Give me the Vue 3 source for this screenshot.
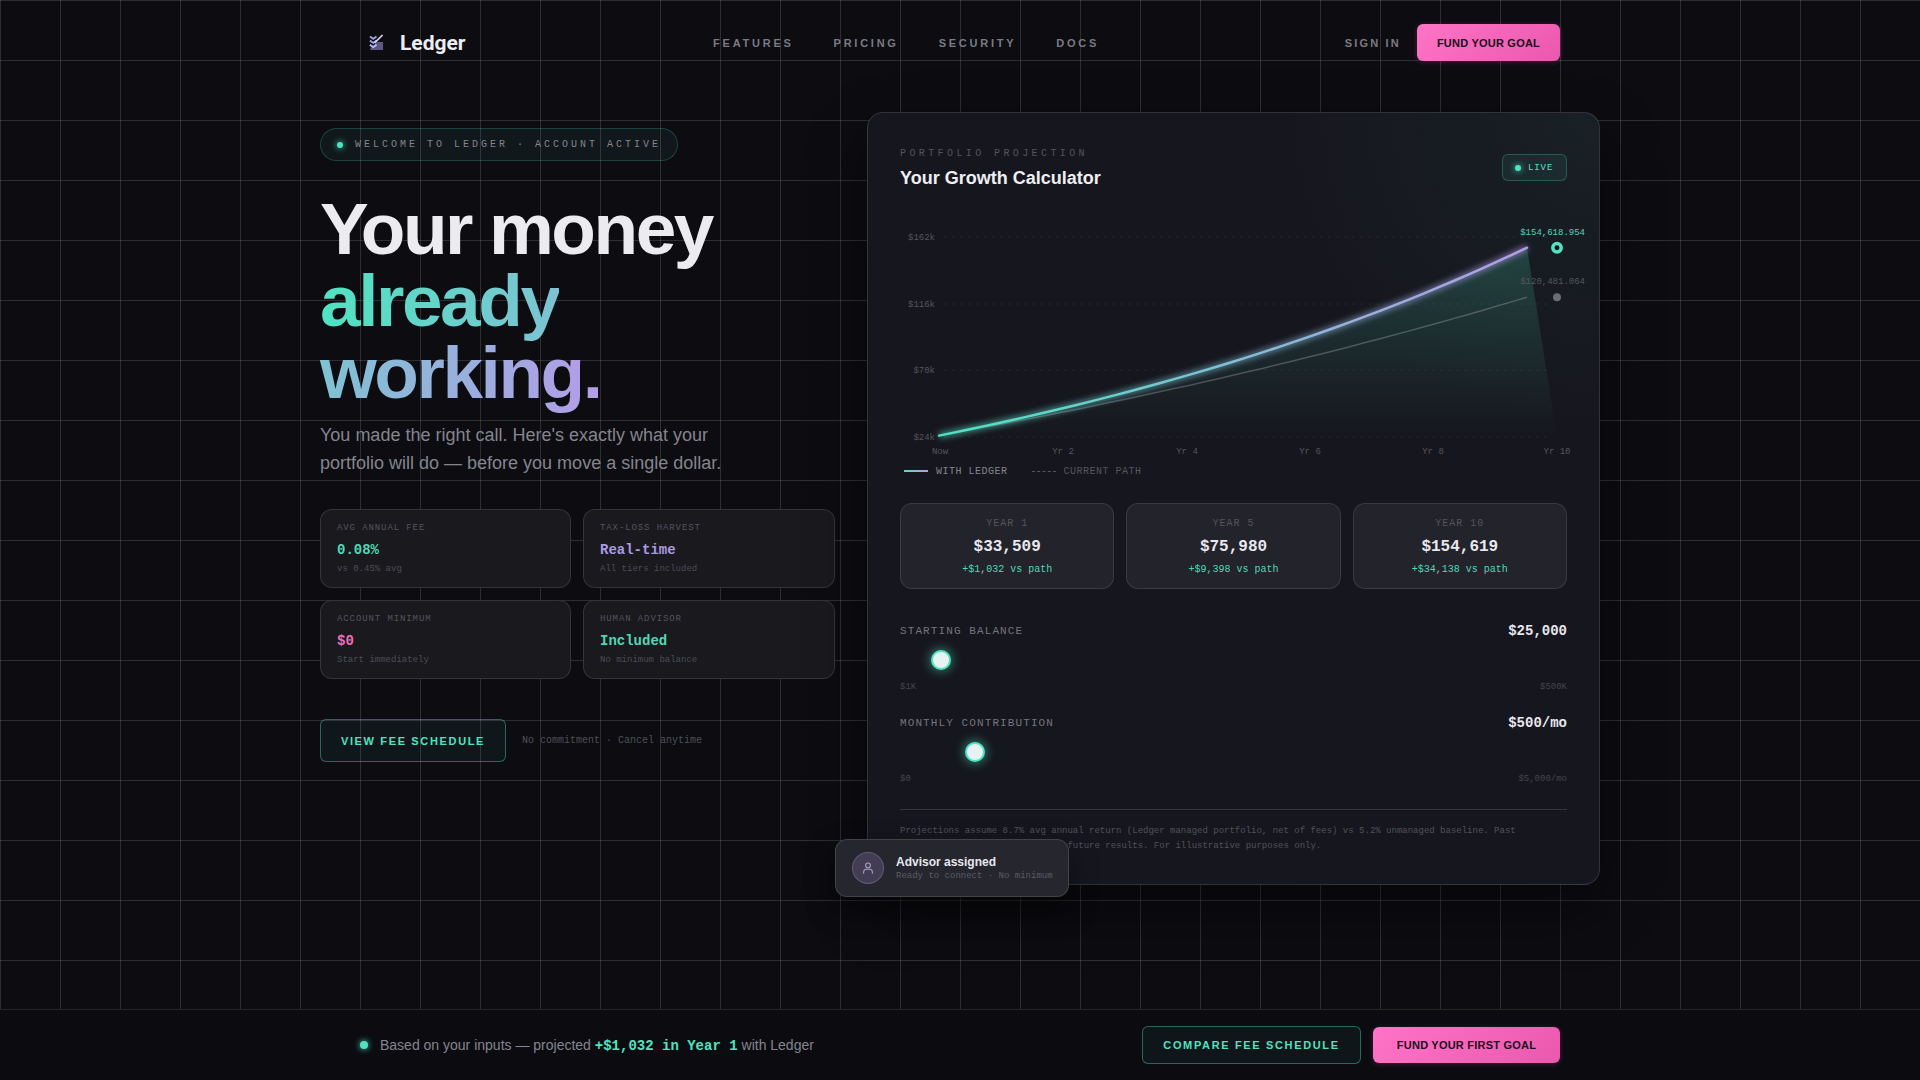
<template>
  <div class="page">
    <header class="nav">
      <div class="brand">
        <svg class="brand-icon" viewBox="0 0 16 18" fill="none">
          <defs>
            <linearGradient id="logoGrad" x1="0" y1="0" x2="1" y2="1">
              <stop offset="0" stop-color="#a99be6" />
              <stop offset="1" stop-color="#7fb6d8" />
            </linearGradient>
          </defs>
          <path d="M8.5 8.5h6.5v8.5H1.5v-2" fill="#6f6a9c" fill-opacity=".8" />
          <path d="M1 2.5l3.5 2.5L8 2.5M1 7 4.5 9.5 8 7M1 11.5 4.5 14 8 11.5" stroke="url(#logoGrad)" stroke-width="2" />
          <path d="M6 9.5 14.5 1" stroke="#d9d4f2" stroke-width="1.8" />
          <path d="M1 11.5 4.5 14 8 11.5" stroke="#c0b6ee" stroke-width="1.6" />
        </svg>
        <span class="brand-name">Ledger</span>
      </div>
      <nav class="nav-links">
        <a v-for="link in navLinks" :key="link">{{ link }}</a>
      </nav>
      <div class="nav-actions">
        <a class="sign-in">SIGN IN</a>
        <button class="btn-pink nav-btn">FUND YOUR GOAL</button>
      </div>
    </header>

    <main class="hero">
      <section class="intro">
        <div class="welcome">
          <span class="dot"></span>
          WELCOME TO LEDGER · ACCOUNT ACTIVE
        </div>
        <h1>Your money<br /><span class="grad">already<br />working.</span></h1>
        <p class="lede">You made the right call. Here's exactly what your portfolio will do — before you move a single dollar.</p>
        <div class="stats">
          <div v-for="s in stats" :key="s.label" class="stat">
            <div class="stat-label">{{ s.label }}</div>
            <div class="stat-value" :class="s.tone">{{ s.value }}</div>
            <div class="stat-note">{{ s.note }}</div>
          </div>
        </div>
        <div class="cta-row">
          <button class="btn-outline view-btn">VIEW FEE SCHEDULE</button>
          <span class="cta-note">No commitment · Cancel anytime</span>
        </div>
      </section>

      <section class="calc">
        <div class="calc-head">
          <div>
            <div class="eyebrow">PORTFOLIO PROJECTION</div>
            <h2>Your Growth Calculator</h2>
          </div>
          <div class="live"><span class="dot small"></span>LIVE</div>
        </div>

        <svg class="chart" viewBox="0 0 667 256" width="667" height="256">
          <defs>
            <linearGradient id="lineGrad" gradientUnits="userSpaceOnUse" x1="39" y1="0" x2="627" y2="0">
              <stop offset="0" stop-color="#4fe3c1" />
              <stop offset="1" stop-color="#b49ce8" />
            </linearGradient>
            <linearGradient id="areaGrad" x1="0" y1="0" x2="0" y2="1">
              <stop offset="0" stop-color="#4fe3c1" stop-opacity=".2" />
              <stop offset="1" stop-color="#4fe3c1" stop-opacity="0" />
            </linearGradient>
            <filter id="glow" x="-5%" y="-20%" width="110%" height="140%">
              <feGaussianBlur stdDeviation="3" />
            </filter>
          </defs>
          <g v-for="t in yTicks" :key="t.label">
            <line class="tick-line" x1="44" x2="650" :y1="t.y" :y2="t.y" />
            <text class="axis" x="35" :y="t.y + 3" text-anchor="end">{{ t.label }}</text>
          </g>
          <text v-for="t in xTicks" :key="t.label" class="axis" :x="t.x" y="254" text-anchor="middle">{{ t.label }}</text>
          <path :d="areaPath" fill="url(#areaGrad)" />
          <path :d="basePath" fill="none" stroke="rgba(255,255,255,.22)" stroke-width="1.5" />
          <path :d="ledgerPath" fill="none" stroke="url(#lineGrad)" stroke-width="5" opacity=".7" filter="url(#glow)" />
          <path :d="ledgerPath" fill="none" stroke="url(#lineGrad)" stroke-width="2.5" stroke-linecap="round" />
          <circle cx="657" :cy="endLedgerY" r="4.2" fill="#14151c" stroke="#4fe3c1" stroke-width="3.5" />
          <circle cx="657" :cy="endBaseY" r="4" fill="#6c6c74" />
          <text class="end-label teal" x="685" :y="endLedgerY - 13" text-anchor="end">{{ money(endLedger) }}</text>
          <text class="end-label" x="685" :y="endBaseY - 13" text-anchor="end">{{ money(endBase) }}</text>
        </svg>

        <div class="legend">
          <span class="legend-item on"><i class="swatch"></i>WITH LEDGER</span>
          <span class="legend-item"><i class="swatch dashed"></i>CURRENT PATH</span>
        </div>

        <div class="years">
          <div v-for="y in years" :key="y.label" class="year">
            <div class="year-label">{{ y.label }}</div>
            <div class="year-value">{{ y.value }}</div>
            <div class="year-delta">{{ y.delta }}</div>
          </div>
        </div>

        <div class="slider-block first">
          <div class="slider-head">
            <span>STARTING BALANCE</span>
            <strong>{{ wholeMoney(balance) }}</strong>
          </div>
          <input v-model.number="balance" type="range" min="1000" max="500000" step="1000" />
          <div class="slider-range"><span>$1K</span><span>$500K</span></div>
        </div>
        <div class="slider-block">
          <div class="slider-head">
            <span>MONTHLY CONTRIBUTION</span>
            <strong>{{ wholeMoney(monthly) }}/mo</strong>
          </div>
          <input v-model.number="monthly" type="range" min="0" max="5000" step="50" />
          <div class="slider-range"><span>$0</span><span>$5,000/mo</span></div>
        </div>

        <p class="disclaimer">Projections assume 8.7% avg annual return (Ledger managed portfolio, net of fees) vs 5.2% unmanaged baseline. Past performance does not guarantee future results. For illustrative purposes only.</p>

        <div class="toast">
          <div class="avatar">
            <svg viewBox="0 0 24 24" width="14" height="14" fill="none" stroke="#a6a2c4" stroke-width="1.8" stroke-linecap="round">
              <circle cx="12" cy="7.5" r="4" />
              <path d="M4.5 21v-2a5 5 0 0 1 5-5h5a5 5 0 0 1 5 5v2" />
            </svg>
          </div>
          <div>
            <div class="toast-title">Advisor assigned</div>
            <div class="toast-sub">Ready to connect · No minimum</div>
          </div>
        </div>
      </section>
    </main>

    <footer class="bottom">
      <div class="bottom-text">
        <span class="dot big"></span>
        <span>Based on your inputs — projected <b>+{{ wholeMoney(years1Gain) }} in Year 1</b> with Ledger</span>
      </div>
      <div class="bottom-actions">
        <button class="btn-outline compare-btn">COMPARE FEE SCHEDULE</button>
        <button class="btn-pink first-btn">FUND YOUR FIRST GOAL</button>
      </div>
    </footer>
  </div>
</template>

<script setup>
import { computed, ref } from "vue";

const navLinks = ["FEATURES", "PRICING", "SECURITY", "DOCS"];

const stats = [
  { label: "AVG ANNUAL FEE", value: "0.08%", note: "vs 0.45% avg", tone: "teal" },
  { label: "TAX-LOSS HARVEST", value: "Real-time", note: "All tiers included", tone: "violet" },
  { label: "ACCOUNT MINIMUM", value: "$0", note: "Start immediately", tone: "pink" },
  { label: "HUMAN ADVISOR", value: "Included", note: "No minimum balance", tone: "teal" },
];

const balance = ref(25000);
const monthly = ref(500);

const project = (rate, months) => {
  const r = rate / 12;
  const g = Math.pow(1 + r, months);
  return balance.value * g + (monthly.value * (g - 1)) / r;
};

const money = (v) => "$" + v.toLocaleString("en-US");
const wholeMoney = (v) => "$" + Math.round(v).toLocaleString("en-US");

const yOf = (v) => 237 - ((v - 24000) / 138000) * 200;
const xOf = (m) => 39 + (m / 120) * 588;

const yTicks = [
  { label: "$162k", y: 37 },
  { label: "$116k", y: 104 },
  { label: "$70k", y: 170 },
  { label: "$24k", y: 237 },
];

const xTicks = [
  { label: "Now", x: 40 },
  { label: "Yr 2", x: 163 },
  { label: "Yr 4", x: 287 },
  { label: "Yr 6", x: 410 },
  { label: "Yr 8", x: 533 },
  { label: "Yr 10", x: 657 },
];

const curve = (rate) => {
  let d = "";
  for (let m = 0; m <= 120; m += 3) {
    d += `${m ? "L" : "M"}${xOf(m).toFixed(1)} ${yOf(project(rate, m)).toFixed(1)}`;
  }
  return d;
};

const ledgerPath = computed(() => curve(0.087));
const basePath = computed(() => curve(0.052));
const areaPath = computed(() => `${ledgerPath.value}L657 237L39 237Z`);

const endLedger = computed(() => project(0.087, 120));
const endBase = computed(() => project(0.052, 120));
const endLedgerY = computed(() => yOf(endLedger.value));
const endBaseY = computed(() => yOf(endBase.value));

const years = computed(() =>
  [1, 5, 10].map((n) => {
    const a = project(0.087, n * 12);
    const b = project(0.052, n * 12);
    return {
      label: `YEAR ${n}`,
      value: wholeMoney(a),
      delta: `+${wholeMoney(a - b)} vs path`,
    };
  })
);

const years1Gain = computed(() => project(0.087, 12) - project(0.052, 12));
</script>

<style>
html,
body {
  margin: 0;
  background: #0c0c11;
}
</style>

<style scoped>
.page {
  height: 1080px;
  overflow: hidden;
  display: flex;
  flex-direction: column;
  color: #e8e8ee;
  font-family: "Liberation Sans", Arial, sans-serif;
  background-color: #0c0c11;
  background-image:
    linear-gradient(rgba(255, 255, 255, 0.14) 1px, transparent 1px),
    linear-gradient(90deg, rgba(255, 255, 255, 0.14) 1px, transparent 1px);
  background-size: 60px 60px;
}

button {
  font-family: "Liberation Sans", Arial, sans-serif;
  cursor: pointer;
}

.teal {
  color: #4fd8b8;
}
.violet {
  color: #a99be0;
}
.pink {
  color: #ef6dbd;
}

/* nav */
.nav {
  width: 1200px;
  margin: 0 auto;
  height: 84px;
  box-sizing: border-box;
  padding-top: 24px;
  display: flex;
  align-items: flex-start;
  justify-content: space-between;
  position: relative;
}
.brand {
  display: flex;
  align-items: center;
  gap: 16px;
  padding-left: 9px;
  height: 37px;
}
.brand-icon {
  width: 15px;
  height: 17px;
}
.brand-name {
  font-family: Roboto, sans-serif;
  font-weight: 700;
  font-size: 21px;
  color: #ececf2;
}
.nav-links {
  display: flex;
  gap: 40px;
  height: 37px;
  align-items: center;
  margin-left: 2px;
}
.nav-links a {
  font-size: 11px;
  font-weight: 700;
  letter-spacing: 0.25em;
  color: #7b7b84;
}
.nav-actions {
  display: flex;
  align-items: center;
  gap: 16px;
}
.sign-in {
  font-size: 11px;
  font-weight: 700;
  letter-spacing: 0.2em;
  color: #7b7b84;
}
.btn-pink {
  border: none;
  border-radius: 6px;
  background: linear-gradient(135deg, #ff74c6, #ea58ae);
  color: #17101a;
  font-weight: 700;
  font-size: 11px;
  box-shadow: 0 1px 6px rgba(255, 105, 190, 0.2);
}
.nav-btn {
  width: 143px;
  height: 37px;
  letter-spacing: 0.02em;
}

/* hero */
.hero {
  flex: 1;
  width: 1280px;
  margin: 0 auto;
  display: grid;
  grid-template-columns: 515px 733px;
  column-gap: 32px;
  padding-top: 28px;
  box-sizing: border-box;
  align-items: start;
}
.intro {
  padding-top: 16px;
}
.dot {
  display: inline-block;
  width: 6px;
  height: 6px;
  border-radius: 50%;
  background: #4fe3c1;
  box-shadow: 0 0 6px #4fe3c1;
  flex: none;
}
.welcome {
  display: inline-flex;
  align-items: center;
  gap: 12px;
  height: 33px;
  box-sizing: border-box;
  padding: 0 16px;
  width: 358px;
  border: 1px solid rgba(79, 227, 193, 0.22);
  border-radius: 17px;
  background: rgba(79, 227, 193, 0.06);
  font-family: "Liberation Mono", monospace;
  font-size: 10px;
  letter-spacing: 0.3em;
  color: #85858c;
  white-space: nowrap;
}
h1 {
  margin: 32px 0 0;
  font-size: 73px;
  line-height: 72px;
  font-weight: 700;
  letter-spacing: -2.45px;
  color: #ebebf0;
}
.grad {
  background: linear-gradient(90deg, #4fe3c1, #b49ce8);
  -webkit-background-clip: text;
  background-clip: text;
  color: transparent;
}
.lede {
  margin: 12px 0 0;
  width: 420px;
  font-size: 18px;
  line-height: 28px;
  color: #85858e;
}
.stats {
  margin-top: 32px;
  display: grid;
  grid-template-columns: 251px 252px;
  gap: 12px;
}
.stat {
  height: 79px;
  box-sizing: border-box;
  padding: 13px 16px;
  border: 1px solid rgba(255, 255, 255, 0.12);
  border-radius: 12px;
  background: #19191e;
  font-family: "Liberation Mono", monospace;
}
.stat-label {
  font-size: 9px;
  line-height: 11px;
  letter-spacing: 0.1em;
  color: #55555c;
}
.stat-value {
  margin-top: 7px;
  font-size: 14px;
  line-height: 18px;
  font-weight: 700;
}
.stat-note {
  margin-top: 4px;
  font-size: 9px;
  line-height: 12px;
  color: #4d4d54;
}
.cta-row {
  margin-top: 40px;
  display: flex;
  align-items: center;
  gap: 16px;
}
.btn-outline {
  background: rgba(79, 227, 193, 0.05);
  border: 1px solid rgba(79, 227, 193, 0.4);
  border-radius: 6px;
  color: #4fe3c1;
  font-weight: 700;
  font-size: 11px;
  letter-spacing: 0.15em;
}
.view-btn {
  width: 186px;
  height: 43px;
}
.cta-note {
  font-family: "Liberation Mono", monospace;
  font-size: 10px;
  color: #505057;
}

/* calculator */
.calc {
  position: relative;
  height: 773px;
  box-sizing: border-box;
  padding: 32px;
  border: 1px solid rgba(255, 255, 255, 0.12);
  border-radius: 16px;
  background: radial-gradient(circle at 100% 0, rgba(79, 227, 193, 0.05), transparent 30%), #16161e;
  box-shadow: 0 24px 60px rgba(0, 0, 0, 0.4);
}
.calc-head {
  display: flex;
  justify-content: space-between;
  align-items: flex-start;
}
.eyebrow {
  margin-top: 3px;
  font-family: "Liberation Mono", monospace;
  font-size: 10px;
  line-height: 12px;
  letter-spacing: 3.4px;
  color: #55555c;
}
h2 {
  margin: 7px 0 0;
  font-size: 18px;
  line-height: 22px;
  font-weight: 700;
  color: #efeff3;
}
.live {
  display: flex;
  align-items: center;
  gap: 7px;
  margin-top: 9px;
  width: 65px;
  height: 27px;
  box-sizing: border-box;
  padding-left: 12px;
  border: 1px solid rgba(79, 227, 193, 0.25);
  border-radius: 6px;
  background: rgba(79, 227, 193, 0.07);
  font-family: "Liberation Mono", monospace;
  font-size: 9px;
  letter-spacing: 0.1em;
  color: #4fe3c1;
}
.dot.small {
  width: 6px;
  height: 6px;
}
.chart {
  display: block;
  margin-top: 11px;
  overflow: visible;
}
.tick-line {
  stroke: rgba(255, 255, 255, 0.06);
  stroke-dasharray: 3 5;
}
.axis {
  font-family: "Liberation Mono", monospace;
  font-size: 9px;
  fill: #55555c;
}
.end-label {
  font-family: "Liberation Mono", monospace;
  font-size: 9px;
  fill: #55555c;
}
.end-label.teal {
  fill: #4fd8b8;
}
.legend {
  display: flex;
  gap: 24px;
  margin-top: 8px;
  padding-left: 4px;
  height: 14px;
  align-items: center;
  position: relative;
}
.legend-item {
  display: flex;
  align-items: center;
  gap: 8px;
  font-family: "Liberation Mono", monospace;
  font-size: 10px;
  letter-spacing: 0.05em;
  color: #55555c;
}
.legend-item.on {
  color: #85858c;
}
.swatch {
  display: block;
  width: 24px;
  height: 2px;
  background: linear-gradient(90deg, #4fe3c1, #b49ce8);
}
.swatch.dashed {
  height: 0;
  background: none;
  border-top: 1px dashed #55555c;
}
.years {
  margin-top: 25px;
  display: grid;
  grid-template-columns: repeat(3, 1fr);
  gap: 12px;
}
.year {
  height: 86px;
  box-sizing: border-box;
  padding-top: 14px;
  border: 1px solid rgba(255, 255, 255, 0.11);
  border-radius: 12px;
  background: #22232b;
  text-align: center;
  font-family: "Liberation Mono", monospace;
}
.year-label {
  font-size: 10px;
  line-height: 12px;
  letter-spacing: 0.1em;
  color: #55555c;
}
.year-value {
  margin-top: 7px;
  font-size: 16px;
  line-height: 20px;
  font-weight: 700;
  color: #e8e8ee;
}
.year-delta {
  margin-top: 7px;
  font-size: 10px;
  line-height: 12px;
  color: #4fd8b8;
}
.slider-block {
  margin-top: 21px;
  font-family: "Liberation Mono", monospace;
}
.slider-block.first {
  margin-top: 33px;
}
.slider-head {
  display: flex;
  justify-content: space-between;
  align-items: center;
  height: 18px;
  font-size: 11px;
  letter-spacing: 0.1em;
  color: #75757e;
}
.slider-head strong {
  font-size: 14px;
  letter-spacing: 0;
  color: #e8e8ee;
}
input[type="range"] {
  -webkit-appearance: none;
  appearance: none;
  display: block;
  width: 100%;
  height: 20px;
  margin: 10px 0 0;
  background: transparent;
  outline: none;
}
input[type="range"]::-webkit-slider-thumb {
  -webkit-appearance: none;
  width: 20px;
  height: 20px;
  border-radius: 50%;
  background: #e8f2f0;
  border: 2px solid #4fe3c1;
  box-sizing: border-box;
  box-shadow: 0 0 12px rgba(79, 227, 193, 0.7);
  cursor: pointer;
}
.slider-range {
  display: flex;
  justify-content: space-between;
  margin-top: 11px;
  font-size: 9px;
  line-height: 12px;
  color: #45454c;
}
.disclaimer {
  margin: 24px 0 0;
  padding-top: 14px;
  border-top: 1px solid rgba(255, 255, 255, 0.13);
  font-family: "Liberation Mono", monospace;
  font-size: 9px;
  line-height: 15px;
  color: #52525a;
}
.toast {
  position: absolute;
  left: -33px;
  bottom: -13px;
  width: 234px;
  height: 58px;
  box-sizing: border-box;
  padding-left: 16px;
  display: flex;
  align-items: center;
  gap: 12px;
  border: 1px solid rgba(255, 255, 255, 0.13);
  border-radius: 12px;
  background: #26262e;
  box-shadow: 0 12px 30px rgba(0, 0, 0, 0.45);
}
.avatar {
  width: 32px;
  height: 32px;
  box-sizing: border-box;
  border-radius: 50%;
  border: 1px solid rgba(180, 156, 232, 0.3);
  background: rgba(180, 156, 232, 0.2);
  display: flex;
  align-items: center;
  justify-content: center;
}
.toast-title {
  font-size: 12px;
  line-height: 15px;
  font-weight: 700;
  color: #e8e8ee;
}
.toast-sub {
  margin-top: 1px;
  font-family: "Liberation Mono", monospace;
  font-size: 9px;
  line-height: 11px;
  color: #5c5c64;
}

/* bottom bar */
.bottom {
  height: 71px;
  flex: none;
  box-sizing: border-box;
  padding: 0 calc((100% - 1200px) / 2);
  display: flex;
  align-items: center;
  justify-content: space-between;
  background: #0b0b10;
  border-top: 1px solid rgba(255, 255, 255, 0.1);
}
.bottom-text {
  display: flex;
  align-items: center;
  gap: 12px;
  font-size: 14px;
  color: #85858e;
}
.bottom-text b {
  font-family: "Liberation Mono", monospace;
  font-weight: 700;
  color: #4fe3c1;
}
.dot.big {
  width: 8px;
  height: 8px;
}
.bottom-actions {
  display: flex;
  gap: 12px;
}
.compare-btn {
  width: 219px;
  height: 38px;
}
.first-btn {
  width: 187px;
  height: 36px;
  align-self: center;
  letter-spacing: 0.02em;
}
</style>
